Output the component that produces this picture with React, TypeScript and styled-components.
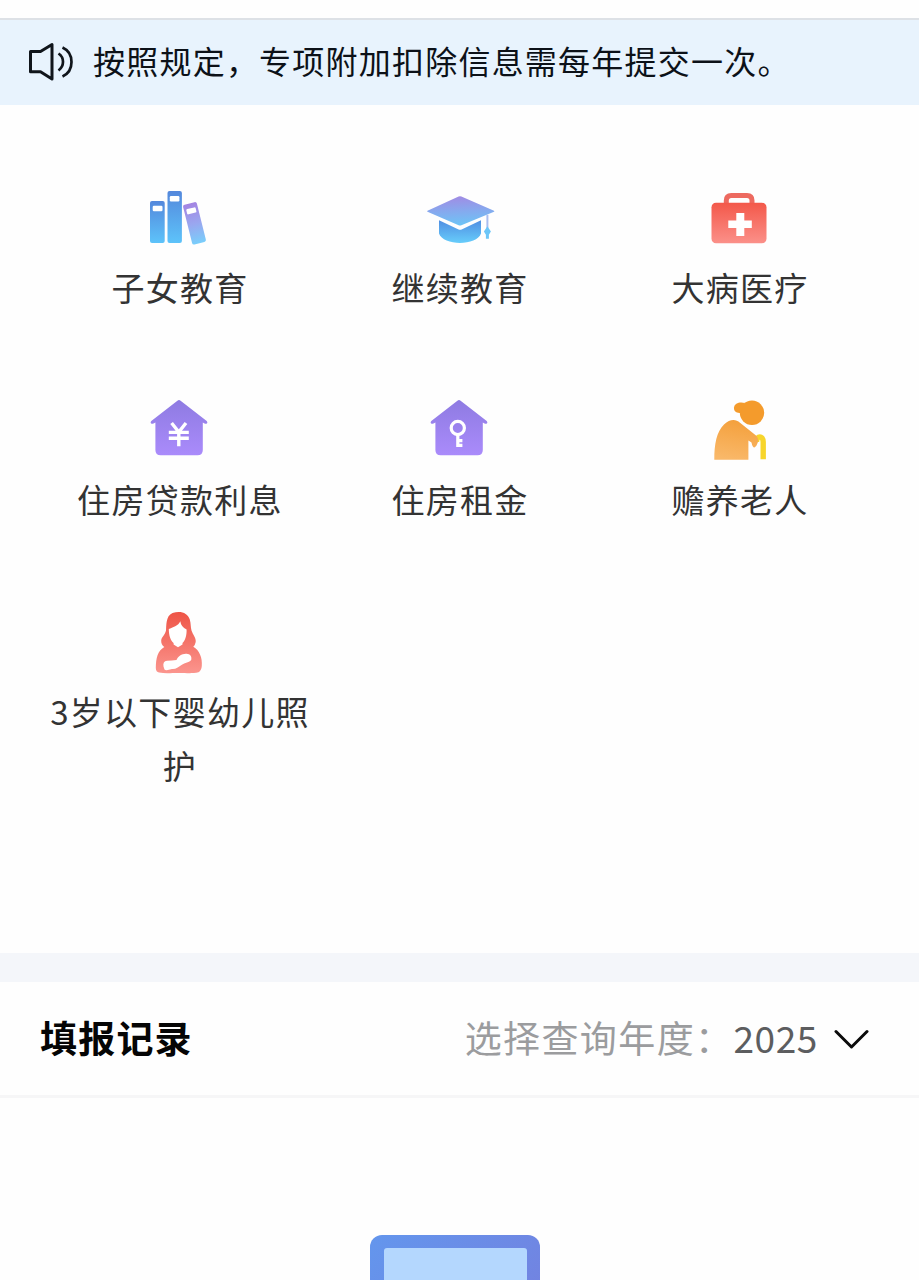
import React from "react";
import styled, { createGlobalStyle } from "styled-components";

const GlobalStyle = createGlobalStyle`
  * { box-sizing: border-box; }
  body {
    margin: 0;
    background: #fefefe;
    font-family: "Noto Sans CJK SC", sans-serif;
  }
`;

const Page = styled.main`
  display: flex;
  flex-direction: column;
  width: 919px;
  height: 1280px;
  overflow: hidden;
  background: #fefefe;
`;

const Notice = styled.div`
  display: flex;
  align-items: center;
  flex: none;
  height: 87px;
  margin-top: 18px;
  padding: 0 0 2px 26px;
  border-top: 2px solid #dde1e6;
  background: #e8f3fd;
`;

const NoticeText = styled.span`
  margin-left: 15px;
  padding-bottom: 3px;
  color: #0c1118;
  font-size: 32px;
  line-height: 48px;
  letter-spacing: 1.22px;
  white-space: nowrap;
`;

const Grid = styled.section`
  display: grid;
  flex: none;
  grid-template-columns: repeat(3, 280px);
  align-content: start;
  row-gap: 80px;
  height: 848px;
  padding: 77px 39px 0;
`;

const Item = styled.div`
  display: flex;
  flex-direction: column;
  align-items: center;
`;

const ItemIcon = styled.svg`
  flex: none;
  width: 80px;
  height: 68px;
`;

const Label = styled.div`
  width: 264px;
  margin-top: 10px;
  padding-left: 2px;
  color: #333;
  font-size: 33px;
  line-height: 54px;
  letter-spacing: 1.3px;
  text-align: center;
  word-break: break-all;
`;

const Strip = styled.div`
  flex: none;
  height: 29px;
  background: #f4f6fa;
`;

const RecordsBar = styled.section`
  display: flex;
  align-items: center;
  justify-content: space-between;
  flex: none;
  height: 116px;
  padding: 0 49px 0 40px;
  border-bottom: 3px solid #f6f6f7;
`;

const Title = styled.h2`
  margin: 0;
  padding-bottom: 4px;
  color: #050505;
  font-size: 37px;
  font-weight: 700;
  line-height: 54px;
  letter-spacing: 1.2px;
`;

const YearPicker = styled.div`
  display: flex;
  align-items: center;
`;

const YearLabel = styled.span`
  padding-bottom: 4px;
  color: #9b9c9e;
  font-size: 37px;
  line-height: 54px;
  letter-spacing: 1.4px;
`;

const Year = styled.span`
  margin-right: 15px;
  padding-bottom: 4px;
  color: #5c5d5f;
  font-size: 37px;
  line-height: 54px;
  letter-spacing: 0.6px;
`;

const Chevron = styled.svg`
  width: 36px;
  height: 24px;
  margin-right: 1px;
`;

const Empty = styled.section`
  display: flex;
  flex: 1;
  justify-content: center;
  min-height: 0;
  padding: 137px 9px 0 0;
  overflow: hidden;
`;

const Books = () => (
  <ItemIcon viewBox="0 0 80 68">
    <defs>
      <linearGradient id="book" x1="0" y1="0" x2="0" y2="1">
        <stop offset="0" stopColor="#5488dc" />
        <stop offset="1" stopColor="#5dc3fa" />
      </linearGradient>
      <linearGradient id="bookTilted" x1="0" y1="0" x2="0" y2="1">
        <stop offset="0" stopColor="#a484e2" />
        <stop offset="0.5" stopColor="#9aa6ef" />
        <stop offset="1" stopColor="#79cefb" />
      </linearGradient>
    </defs>
    <rect x="11" y="19" width="14.7" height="42" rx="2" fill="url(#book)" />
    <rect x="28.5" y="9" width="14.4" height="52" rx="2" fill="url(#book)" />
    <rect x="13.7" y="23.8" width="9.8" height="5.4" rx="1.2" fill="#fff" />
    <rect x="30.8" y="14" width="9.6" height="5.4" rx="1.2" fill="#fff" />
    <g transform="rotate(-14 55.4 41)">
      <rect x="48.3" y="20.8" width="14.2" height="41" rx="2" fill="url(#bookTilted)" />
      <rect x="50.6" y="25.8" width="9.6" height="5.4" rx="1.2" fill="#fff" />
    </g>
  </ItemIcon>
);

const Cap = () => (
  <ItemIcon viewBox="0 0 80 68">
    <defs>
      <linearGradient id="capTop" x1="0.4" y1="0" x2="0.5" y2="1">
        <stop offset="0" stopColor="#a18be4" />
        <stop offset="0.5" stopColor="#86a9ee" />
        <stop offset="1" stopColor="#6cc5f6" />
      </linearGradient>
      <linearGradient id="capBase" x1="0" y1="0" x2="0" y2="1">
        <stop offset="0" stopColor="#508ee2" />
        <stop offset="1" stopColor="#67cdfb" />
      </linearGradient>
    </defs>
    <path d="M8.5 28.7 39.6 14.5q1.4-.6 2.8 0L75 28.7q.8.6 0 1.1L42.4 43.3q-1.4.6-2.8 0L8.5 29.8q-.8-.5 0-1.1Z" fill="url(#capTop)" />
    <path d="M20 38.2 39.6 47.5q1.5.7 3 0L62 38.2V51.5C60 57.5 50.5 61 41 61S22 57.5 20 51.5Z" fill="url(#capBase)" />
    <path d="M68.4 32.8V46" stroke="#a9bdf0" strokeWidth="2" />
    <path d="M68.4 44.2 71.9 49.4 69.9 52.8V56.8H66.9V52.8L64.9 49.4Z" fill="#6cc6f8" />
  </ItemIcon>
);

const MedicalKit = () => (
  <ItemIcon viewBox="0 0 80 68">
    <defs>
      <linearGradient id="kit" x1="0" y1="0" x2="0" y2="1">
        <stop offset="0" stopColor="#f3584a" />
        <stop offset="1" stopColor="#fb9089" />
      </linearGradient>
    </defs>
    <path d="M27.3 22V18.5q0-5 5-5H48q5 0 5 5V22" fill="none" stroke="#ed6a60" strokeWidth="5" />
    <rect x="12.5" y="20.8" width="55" height="40.4" rx="4.5" fill="url(#kit)" />
    <path d="M37.3 31h8v7.5h7.5v7.6h-7.5V54h-8v-7.9h-8v-7.6h8Z" fill="#fff" />
  </ItemIcon>
);

const HouseIcon = ({ id, children }: { id: string; children: React.ReactNode }) => (
  <ItemIcon viewBox="0 0 80 68">
    <defs>
      <linearGradient id={id} x1="0" y1="0" x2="0" y2="1">
        <stop offset="0" stopColor="#8e7be2" />
        <stop offset="1" stopColor="#aa8bfb" />
      </linearGradient>
    </defs>
    <path
      d="M38.4 6.7q1.6-1.2 3.2 0L67.7 27q1.2 1.2.4 2.2-1.1 1-2.6.2L63.8 28.5V56q0 5.3-5.3 5.3H21.7q-5.3 0-5.3-5.3V28.5L14.5 29.4q-1.5.8-2.6-.2-.8-1 .4-2.2Z"
      fill={`url(#${id})`}
    />
    {children}
  </ItemIcon>
);

const LoanHouse = () => (
  <HouseIcon id="loanHouse">
    <path d="M32.6 29 39.8 38 47 29M29.8 38.4H49.8M29.8 44.2H49.8M39.8 37V52.2" fill="none" stroke="#fff" strokeWidth="3.4" />
  </HouseIcon>
);

const RentHouse = () => (
  <HouseIcon id="rentHouse">
    <circle cx="38.8" cy="34" r="6.6" fill="none" stroke="#fff" strokeWidth="3.2" />
    <path d="M38.8 40.5V53M38.8 46.6H43.4M38.8 51.4H43.4" fill="none" stroke="#fff" strokeWidth="3.2" />
  </HouseIcon>
);

const Elder = () => (
  <ItemIcon viewBox="0 0 80 68">
    <defs>
      <linearGradient id="elder" x1="0.6" y1="0" x2="0.4" y2="1">
        <stop offset="0" stopColor="#f4a03c" />
        <stop offset="1" stopColor="#f9b869" />
      </linearGradient>
    </defs>
    <path d="M57.5 48C57.5 41.3 64.2 41.3 64.2 48V65.2" fill="none" stroke="#f7d52c" strokeWidth="5.4" />
    <circle cx="53" cy="18.8" r="12.2" fill="#f49b2c" />
    <path d="M46 9C41 7.5 35.5 9 35 13.5S38.500 19 41.500 19Z" fill="#f49b2c" />
    <path d="M15.3 65.8C15.3 50 17.5 38 25 30.5 31 25 36.5 25 41 28.7L57 41.5Q60 44.5 58.8 48.5T55.4 53.500Q53.5 53.5 52.5 48.5L49.4 46.5V65.8Z" fill="url(#elder)" />
  </ItemIcon>
);

const MotherAndBaby = () => (
  <ItemIcon viewBox="0 0 80 68">
    <defs>
      <linearGradient id="mother" x1="0" y1="0" x2="0" y2="1">
        <stop offset="0" stopColor="#ee5446" />
        <stop offset="1" stopColor="#fb958e" />
      </linearGradient>
    </defs>
    <path
      d="M33.5 7C42 4.5 48.5 7 50.8 13.5 52 17.5 51.5 21 52.5 24.5 54 29 57.3 32 56.7 36Q56.200 39 54.3 40.7C60.5 44 63.5 52 62.8 60Q62.5 64.5 59.5 66.3C53 67.8 48 67 40 67S26 67.8 20 66.5Q17 66 16.8 62C17 52 18.5 45 25.3 41Q22 38.5 22.2 34.5C22.5 31 26 29 27 24.5 27.5 20 26.5 10 33.5 7Z"
      fill="url(#mother)"
    />
    <path d="M41.3 15.3C39.5 20 33.5 21.5 29.8 23 29.8 29.5 31.6 34.5 34.6 37V38.6L39 41.2 43.5 38.6V37C46.2 34.5 47.8 29.5 47.6 23.5Q42 21 41.3 15.3Z" fill="#fff" />
    <path d="M24.5 60.5Q23.5 55.5 28 54.8 33 54.8 37.5 54C39 50.3 43 47.4 47.5 47.7 51 47.8 53.2 50.5 52.2 54 50.5 56.500 46 56.800 42.5 58.900 39 60.800 37 63.400 33 63Q27 65 25.5 63.500Z" fill="#fff" />
  </ItemIcon>
);

const deductions = [
  { label: "子女教育", Icon: Books },
  { label: "继续教育", Icon: Cap },
  { label: "大病医疗", Icon: MedicalKit },
  { label: "住房贷款利息", Icon: LoanHouse },
  { label: "住房租金", Icon: RentHouse },
  { label: "赡养老人", Icon: Elder },
  { label: "3岁以下婴幼儿照护", Icon: MotherAndBaby },
];

export default function App() {
  return (
    <Page>
      <GlobalStyle />
      <Notice>
        <svg width="52" height="48" viewBox="0 0 52 48" fill="none" stroke="#10151b" strokeWidth="3">
          <path d="M4.5 13.5H14.5L26 6.5V41L14.5 33.8H4.5Z" strokeLinejoin="round" />
          <path d="M32.5 15.5C38.5 19.5 38.5 28 32.5 32.5M36.5 9.5C48.5 15 48.5 33 36.5 38.5" strokeWidth="2.7" />
        </svg>
        <NoticeText>按照规定，专项附加扣除信息需每年提交一次。</NoticeText>
      </Notice>
      <Grid>
        {deductions.map(({ label, Icon }) => (
          <Item key={label}>
            <Icon />
            <Label>{label}</Label>
          </Item>
        ))}
      </Grid>
      <Strip />
      <RecordsBar>
        <Title>填报记录</Title>
        <YearPicker>
          <YearLabel>选择查询年度：</YearLabel>
          <Year>2025</Year>
          <Chevron viewBox="0 0 36 24" fill="none" stroke="#0b0b0b" strokeWidth="3" strokeLinecap="round" strokeLinejoin="round">
            <path d="M3 4.5 18.5 20 34 4.5" />
          </Chevron>
        </YearPicker>
      </RecordsBar>
      <Empty>
        <svg width="170" height="120" viewBox="0 0 170 120">
          <defs>
            <linearGradient id="frame" x1="0" y1="0" x2="1" y2="0.6">
              <stop offset="0" stopColor="#6396ed" />
              <stop offset="1" stopColor="#7382e0" />
            </linearGradient>
          </defs>
          <rect width="170" height="120" rx="12" fill="url(#frame)" />
          <rect x="14" y="13" width="143" height="107" rx="3" fill="#b4d7fe" />
        </svg>
      </Empty>
    </Page>
  );
}
